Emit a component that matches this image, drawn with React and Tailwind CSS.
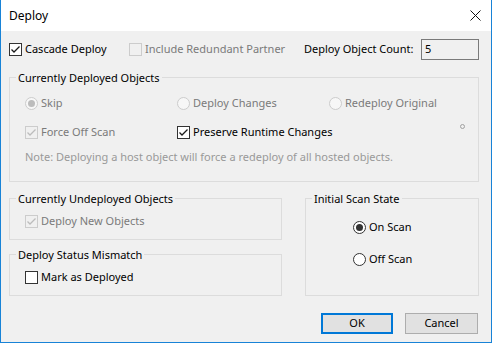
import React from 'react';

const font = { fontFamily: '"Noto Sans", "Open Sans", sans-serif' };

function Check({ checked, disabled, label }) {
  return (
    <label className={`flex items-center h-[15px] ${disabled ? 'text-[#7a7a7a]' : 'text-black'}`}>
      <span
        className={`w-[13px] h-[13px] border flex items-center justify-center mr-[3px] ${
          disabled ? 'border-[#cccccc] bg-[#f0f0f0]' : 'border-[#333333] bg-white'
        }`}
      >
        {checked && (
          <svg width="11" height="11" viewBox="0 0 11 11">
            <path
              d="M1.5 5.5 L4 8 L9.5 2.5"
              fill="none"
              stroke={disabled ? '#bcbcbc' : '#1a1a1a'}
              strokeWidth="1.3"
            />
          </svg>
        )}
      </span>
      {label}
    </label>
  );
}

function Radio({ checked, disabled, label }) {
  return (
    <label className={`flex items-center h-[15px] ${disabled ? 'text-[#7a7a7a]' : 'text-black'}`}>
      <span
        className={`w-[13px] h-[13px] rounded-full border flex items-center justify-center mr-[3px] ${
          disabled ? 'border-[#cccccc] bg-[#f7f7f7]' : 'border-[#333333] bg-white'
        }`}
      >
        {checked && (
          <span
            className={`w-[7px] h-[7px] rounded-full ${disabled ? 'bg-[#bcbcbc]' : 'bg-[#333333]'}`}
          />
        )}
      </span>
      {label}
    </label>
  );
}

function Group({ title, className = '', children }) {
  return (
    <fieldset className={`border border-[#dcdcdc] ${className}`}>
      <legend className="ml-[6px] px-[2px] leading-[15px]">{title}</legend>
      {children}
    </fieldset>
  );
}

export default function App() {
  return (
    <div
      className="w-[492px] h-[343px] flex flex-col border-x border-b border-[#1883d7] text-[11px] text-black"
      style={font}
    >
      {/* title bar */}
      <div className="h-[31px] bg-white flex items-center justify-between pl-[8px] pr-[10px] shrink-0">
        <span className="text-[12px]">Deploy</span>
        <svg width="11" height="11" viewBox="0 0 11 11">
          <path d="M0.5 0.5 L10.5 10.5 M10.5 0.5 L0.5 10.5" stroke="#111" strokeWidth="1" />
        </svg>
      </div>

      {/* body */}
      <div className="flex-1 bg-[#f0f0f0] pl-[8px] pt-[8px]">
        <div className="flex items-center h-[21px]">
          <div className="w-[120px]">
            <Check checked label="Cascade Deploy" />
          </div>
          <div className="w-[175px]">
            <Check disabled label="Include Redundant Partner" />
          </div>
          <div className="w-[117px]">Deploy Object Count:</div>
          <div className="w-[58px] h-[21px] border border-[#7a7a7a] bg-[#f0f0f0] flex items-center pl-[3px]">
            5
          </div>
        </div>

        <Group title="Currently Deployed Objects" className="mt-[10px] w-[470px] pb-[16px] relative">
          <div className="pl-[15px]">
            <div className="grid grid-cols-[152px_152px_auto] pt-[11px]">
              <Radio checked disabled label="Skip" />
              <Radio disabled label="Deploy Changes" />
              <Radio disabled label="Redeploy Original" />
            </div>
            <div className="grid grid-cols-[152px_auto] mt-[14px]">
              <Check checked disabled label="Force Off Scan" />
              <Check checked label="Preserve Runtime Changes" />
            </div>
            <div className="mt-[10px] h-[15px] flex items-center text-[#999999]">
              Note: Deploying a host object will force a redeploy of all hosted objects.
            </div>
          </div>
          <span className="absolute left-[450px] top-[39px] w-[5px] h-[5px] rounded-full border border-[#a0a0a0]" />
        </Group>

        <div className="flex mt-[9px]">
          <div className="w-[273px] flex flex-col">
            <Group title="Currently Undeployed Objects" className="pb-[10px]">
              <div className="pt-[8px] pl-[15px]">
                <Check checked disabled label="Deploy New Objects" />
              </div>
            </Group>
            <Group title="Deploy Status Mismatch" className="mt-[7px] pb-[10px]">
              <div className="pt-[8px] pl-[15px]">
                <Check label="Mark as Deployed" />
              </div>
            </Group>
          </div>
          <Group title="Initial Scan State" className="ml-[23px] w-[174px] h-[105px]">
            <div className="pl-[47px]">
              <div className="pt-[14px]">
                <Radio checked label="On Scan" />
              </div>
              <div className="mt-[17px]">
                <Radio label="Off Scan" />
              </div>
            </div>
          </Group>
        </div>

        <div className="flex justify-end gap-[12px] mt-[17px] pr-[13px]">
          <button className="w-[72px] h-[21px] border-2 border-[#0078d7] bg-[#e1e1e1] text-[11px]">
            OK
          </button>
          <button className="w-[73px] h-[21px] border border-[#adadad] bg-[#e1e1e1] text-[11px]">
            Cancel
          </button>
        </div>
      </div>
    </div>
  );
}
